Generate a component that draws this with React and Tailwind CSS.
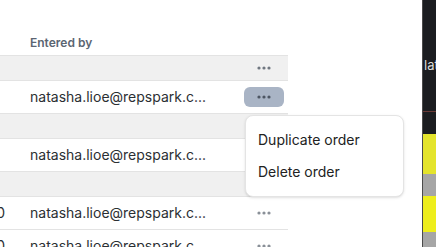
import { useState } from "react";

function Dots({ className = "" }) {
  return (
    <svg width="14" height="4" viewBox="0 0 14 4" className={className}>
      <circle cx="2" cy="2" r="1.6" fill="currentColor" />
      <circle cx="7" cy="2" r="1.6" fill="currentColor" />
      <circle cx="12" cy="2" r="1.6" fill="currentColor" />
    </svg>
  );
}

const rows = [
  { type: "group", dots: true },
  { type: "order", active: true },
  { type: "group" },
  { type: "order" },
  { type: "group" },
  { type: "order", amount: "1,250.00", dots: true },
  { type: "order", amount: "2,100.00", dots: true },
];

export default function App() {
  const [menuOpen] = useState(true);

  return (
    <div
      className="relative flex h-[247px] w-[436px] overflow-hidden bg-white text-[#2b2f33]"
      style={{ fontFamily: "Inter, 'Noto Sans', sans-serif" }}
    >
      {/* table */}
      <div className="w-[288px] shrink-0">
        <div className="flex h-[55px] items-end pb-1 pl-[30px]">
          <span className="text-xs font-semibold text-[#5b6572]">Entered by</span>
        </div>
        {rows.map((row, i) =>
          row.type === "group" ? (
            <div
              key={i}
              className="flex h-[25px] items-center border-t border-[#e3e3e3] bg-[#f0f0f0]"
            >
              <div className="flex-1" />
              <div className="flex w-[48px] justify-center text-[#707780]">
                {row.dots && <Dots />}
              </div>
            </div>
          ) : (
            <div
              key={i}
              className="flex h-[33px] items-center border-t border-[#e3e3e3] bg-white"
            >
              <div className="flex w-[30px] shrink-0 justify-end overflow-hidden pr-[25px] text-sm whitespace-nowrap">
                {row.amount && <span>{row.amount}</span>}
              </div>
              <div className="w-[210px] truncate text-sm">natasha.lioe@repspark.c...</div>
              <div className="flex w-[48px] justify-center">
                {row.active ? (
                  <button className="flex h-5 w-10 items-center justify-center rounded-md bg-[#a9b4c5] text-[#4d5663]">
                    <Dots />
                  </button>
                ) : (
                  <span className="text-[#8a9098]">{row.dots && <Dots />}</span>
                )}
              </div>
            </div>
          )
        )}
      </div>

      <div className="flex-1" />

      {/* neighbouring window */}
      <div className="flex w-[14px] shrink-0 flex-col border-l border-[#4a4a4a] bg-[#1b1d20]">
        <div className="h-[57px]" />
        <div className="overflow-hidden pl-[1px] text-[13px] leading-4 whitespace-nowrap text-[#dcdcdc]">lat</div>
        <div className="h-[38px]" />
        <div className="h-px bg-[#6a3a36]" />
        <div className="h-[22px]" />
        <div className="h-[40px] bg-[#e4e42c]" />
        <div className="h-[22px] bg-[#a6a6a6]" />
        <div className="h-[36px] bg-[#eeee1c]" />
        <div className="flex-1 bg-[#a6a6a6]" />
      </div>

      {menuOpen && (
        <div className="absolute top-[115px] left-[245px] w-[159px] rounded-lg border border-[#e4e4e4] bg-white py-2 shadow-sm">
          <div className="flex h-8 items-center px-3 text-sm text-[#222]">Duplicate order</div>
          <div className="flex h-8 items-center px-3 text-sm text-[#222]">Delete order</div>
        </div>
      )}
    </div>
  );
}
